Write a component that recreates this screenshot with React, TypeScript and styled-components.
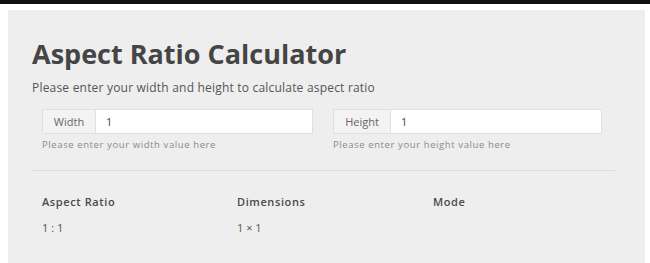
import React from "react";
import styled, { createGlobalStyle } from "styled-components";

const GlobalStyle = createGlobalStyle`
  html, body {
    margin: 0;
    padding: 0;
    background: #ffffff;
    font-family: "Open Sans", "Liberation Sans", sans-serif;
  }
`;

const TopBar = styled.div`
  height: 4px;
  background: #111;
`;

const Page = styled.div`
  padding: 6px 5px 0 8px;
`;

const Panel = styled.div`
  background: #eeeeee;
  height: 253px;
  padding: 27px 30px 0 24px;
  box-sizing: border-box;
`;

const Title = styled.h1`
  margin: 0;
  font-size: 27px;
  font-weight: 700;
  color: #454545;
  line-height: 34px;
`;

const Subtitle = styled.p`
  margin: 9px 0 0;
  font-size: 12px;
  letter-spacing: 0.2px;
  line-height: 16px;
  color: #555;
`;

const InputRow = styled.div`
  display: grid;
  grid-template-columns: 271px 269px;
  column-gap: 20px;
  padding: 0 10px;
  margin-top: 13px;
`;

const Field = styled.div`
  display: flex;
  flex-direction: column;
`;

const Group = styled.div`
  display: flex;
  height: 23px;
  border: 1px solid #e0e0e0;
`;

const Addon = styled.span<{ $w: number }>`
  width: ${(p) => p.$w}px;
  display: flex;
  align-items: center;
  justify-content: center;
  background: #f3f3f3;
  border-right: 1px solid #e0e0e0;
  font-size: 11px;
  color: #666;
`;

const Input = styled.div`
  flex: 1;
  background: #fff;
  display: flex;
  align-items: center;
  padding-left: 10px;
  font-size: 11px;
  color: #444;
`;

const Help = styled.span`
  margin-top: 4px;
  font-size: 9.5px;
  letter-spacing: 0.6px;
  color: #8a8a8a;
`;

const Divider = styled.hr`
  margin: 19px 0 0;
  border: 0;
  border-top: 1px solid #dcdcdc;
`;

const Results = styled.div`
  display: grid;
  grid-template-columns: 195px 196px 150px;
  padding: 0 10px;
  margin-top: 23px;
  row-gap: 11px;
`;

const ResLabel = styled.div`
  font-size: 11px;
  letter-spacing: 0.6px;
  line-height: 15px;
  font-weight: 600;
  color: #4a4a4a;
`;

const ResValue = styled.div`
  font-size: 11px;
  line-height: 15px;
  color: #555;
`;

export default function App() {
  return (
    <>
      <GlobalStyle />
      <TopBar />
      <Page>
        <Panel>
          <Title>Aspect Ratio Calculator</Title>
          <Subtitle>Please enter your width and height to calculate aspect ratio</Subtitle>
          <InputRow>
            <Field>
              <Group>
                <Addon $w={52}>Width</Addon>
                <Input>1</Input>
              </Group>
              <Help>Please enter your width value here</Help>
            </Field>
            <Field>
              <Group>
                <Addon $w={56}>Height</Addon>
                <Input>1</Input>
              </Group>
              <Help>Please enter your height value here</Help>
            </Field>
          </InputRow>
          <Divider />
          <Results>
            <ResLabel>Aspect Ratio</ResLabel>
            <ResLabel>Dimensions</ResLabel>
            <ResLabel>Mode</ResLabel>
            <ResValue>1 : 1</ResValue>
            <ResValue>1 × 1</ResValue>
            <ResValue></ResValue>
          </Results>
        </Panel>
      </Page>
    </>
  );
}
